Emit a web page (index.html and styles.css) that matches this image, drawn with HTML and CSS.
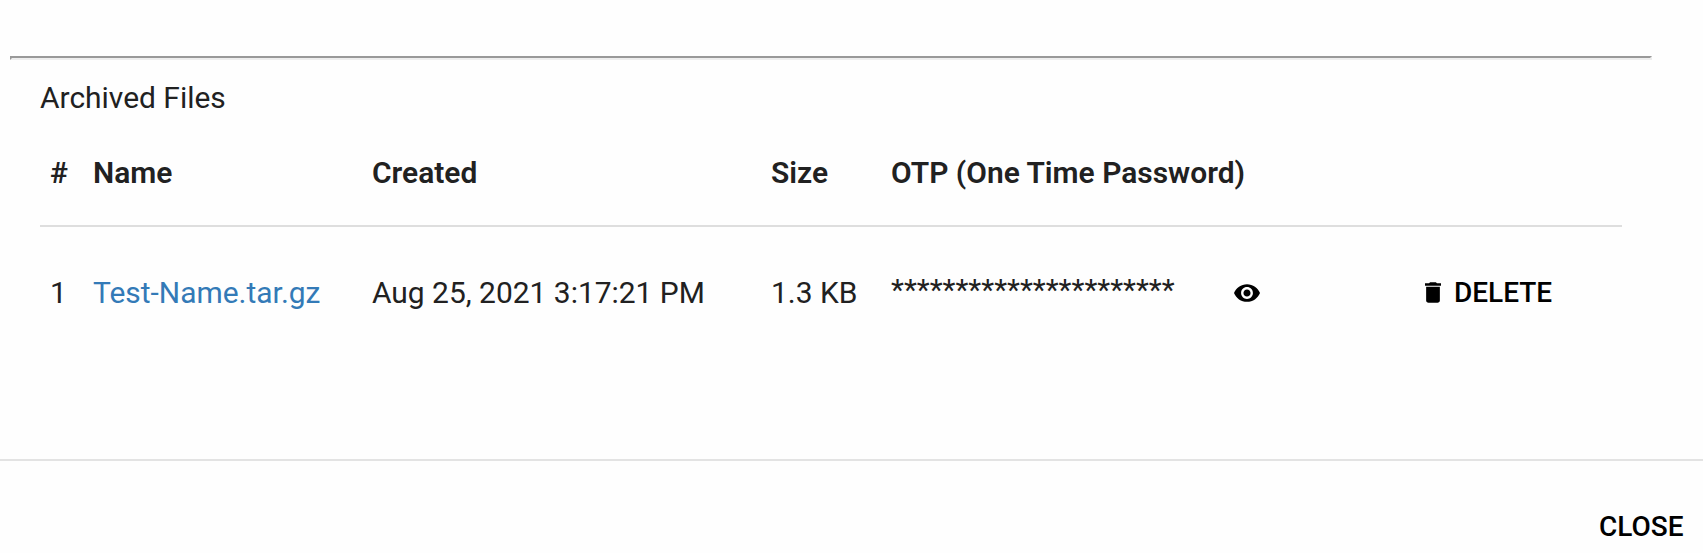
FILE: index.html
```html
<!DOCTYPE html>
<html lang="en">
<head>
<meta charset="utf-8">
<title>Archived Files</title>
<link rel="stylesheet" href="styles.css">
</head>
<body>
<main class="dialog">
  <div class="divider"></div>
  <section class="archive">
    <h2 class="title">Archived Files</h2>
    <div class="row head">
      <span>#</span><span>Name</span><span>Created</span><span>Size</span><span>OTP (One Time Password)</span>
    </div>
    <div class="row item">
      <span>1</span><a class="link">Test-Name.tar.gz</a><span>Aug 25, 2021 3:17:21 PM</span><span>1.3 KB</span><span class="otp">**********************</span>
      <svg class="eye" viewBox="1 4.5 22 15"><path d="M12 4.5C7 4.5 2.73 7.61 1 12c1.73 4.39 6 7.5 11 7.5s9.27-3.11 11-7.5c-1.73-4.39-6-7.5-11-7.5zM12 17c-2.76 0-5-2.24-5-5s2.24-5 5-5 5 2.24 5 5-2.24 5-5 5zm0-8c-1.66 0-3 1.34-3 3s1.34 3 3 3 3-1.34 3-3-1.34-3-3-3z"/></svg>
      <span class="delete"><svg class="trash" viewBox="5 3 14 18"><path d="M6 19c0 1.1.9 2 2 2h8c1.1 0 2-.9 2-2V7H6v12zM19 4h-3.500l-1-1h-5l-1 1H5v2h14V4z"/></svg><span>DELETE</span></span>
    </div>
  </section>
  <footer class="footer"><span class="close">CLOSE</span></footer>
</main>
</body>
</html>
```
FILE: styles.css
```css
body { margin: 0; background: #fefefe; color: #212121; font: 29.95px/36px Roboto, sans-serif; }
.dialog { height: 553px; display: flex; flex-direction: column; box-sizing: border-box; padding-top: 56px; }
.divider { width: 1638px; margin-left: 10px; border: 2px solid; border-color: #999 #eee #eee #999; }
.archive { flex: 1; padding: 20px 81px 0 40px; }
.title { margin: 0; font-size: 29.95px; font-weight: 400; }
.row { display: grid; grid-template-columns: 43px 279px 399px 120px 343px 191px 1fr; align-items: center; padding-left: 10px; white-space: nowrap; }
.head { height: 88px; padding-bottom: 18px; box-sizing: border-box; font-weight: 600; margin-top: 23px; border-bottom: 2px solid #dedede; }
.item { height: 132px; }
.link { color: #337ab7; }
.otp { padding-bottom: 6px; }
.eye { width: 26px; height: 18px; padding-bottom: 1px; }
.trash { width: 16px; height: 21px; padding-bottom: 1px; }
.delete { display: flex; align-items: center; gap: 13px; color: #000; font-size: 28px; font-weight: 500; }
.footer { box-sizing: border-box; height: 94px; border-top: 2px solid #e3e3e3; padding: 48px 19.5px 0 0; text-align: right; color: #000; font-size: 28px; font-weight: 500; }
```
